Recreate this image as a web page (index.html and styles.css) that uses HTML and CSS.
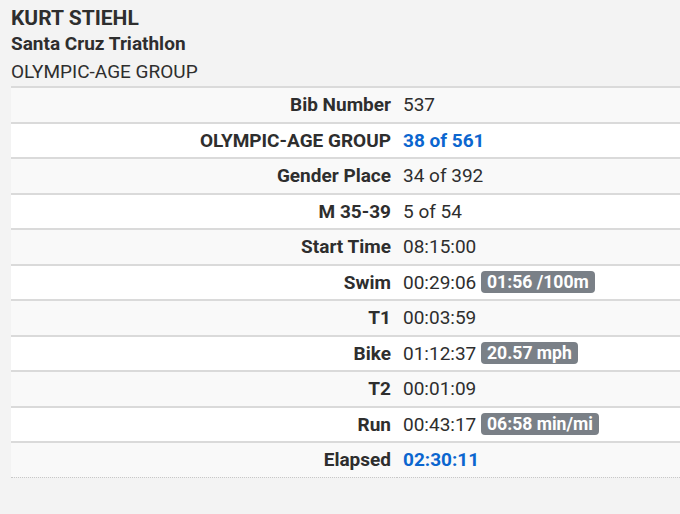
FILE: index.html
```html
<!DOCTYPE html>
<html>
<head>
<meta charset="utf-8">
<link rel="stylesheet" href="styles.css">
</head>
<body>
<div class="page">
  <div class="head">
    <div class="name">KURT STIEHL</div>
    <div class="race">Santa Cruz Triathlon</div>
    <div class="division">OLYMPIC-AGE GROUP</div>
  </div>
  <table class="results">
    <tbody>
      <tr><th>Bib Number</th><td>537</td></tr>
      <tr><th>OLYMPIC-AGE GROUP</th><td><span class="blue">38 of 561</span></td></tr>
      <tr><th>Gender Place</th><td>34 of 392</td></tr>
      <tr><th>M 35-39</th><td>5 of 54</td></tr>
      <tr><th>Start Time</th><td>08:15:00</td></tr>
      <tr><th>Swim</th><td>00:29:06 <span class="badge">01:56 /100m</span></td></tr>
      <tr><th>T1</th><td>00:03:59</td></tr>
      <tr><th>Bike</th><td>01:12:37 <span class="badge">20.57 mph</span></td></tr>
      <tr><th>T2</th><td>00:01:09</td></tr>
      <tr><th>Run</th><td>00:43:17 <span class="badge">06:58 min/mi</span></td></tr>
      <tr><th>Elapsed</th><td><span class="blue">02:30:11</span></td></tr>
    </tbody>
  </table>
</div>
</body>
</html>
```
FILE: styles.css
```css
html, body {
  margin: 0;
  padding: 0;
  background: #f3f3f3;
}
body {
  font-family: Roboto, "Liberation Sans", sans-serif;
  color: #2e2e2e;
}
.page {
  padding: 6px 0 0 11px;
}
.head .name {
  font-size: 21px;
  font-weight: 700;
  line-height: 25px;
}
.head .race {
  font-size: 19px;
  font-weight: 700;
  line-height: 26px;
}
.head .division {
  font-size: 19px;
  line-height: 29px;
}
.results {
  width: 100%;
  border-collapse: collapse;
  margin-top: 0;
  font-size: 19px;
  border-bottom: 1px dotted #c8c8c8;
}
.results tr {
  border-top: 2px solid #dadada;
}
.results tr:nth-child(odd) {
  background: #f9f9f9;
}
.results tr:nth-child(even) {
  background: #fff;
}
.results th, .results td {
  padding: 4px 6px;
  line-height: 25.5px;
  vertical-align: middle;
  white-space: nowrap;
}
.results th {
  width: 374px;
  text-align: right;
  font-weight: 700;
}
.results td {
  text-align: left;
}
.blue {
  color: #0b66cf;
  font-weight: 700;
}
.badge {
  display: inline-block;
  background: #7a8087;
  color: #fff;
  font-weight: 700;
  font-size: 17.6px;
  line-height: 22px;
  padding: 0 6px;
  border-radius: 4px;
  margin-left: 0;
  vertical-align: 1px;
}
```
